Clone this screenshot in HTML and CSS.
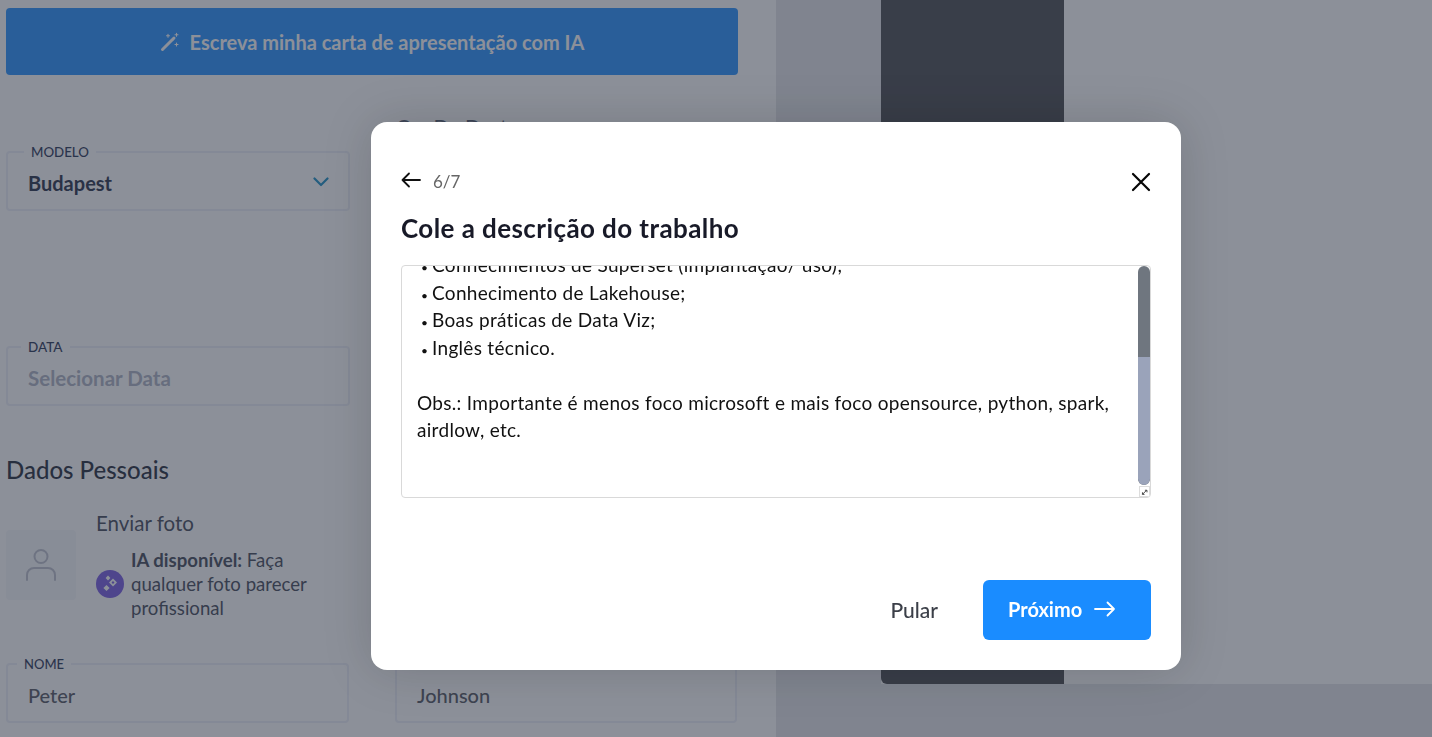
FILE: index.html
```html
<!DOCTYPE html>
<html lang="pt">
<head>
<meta charset="utf-8">
<title>Carta de apresentação</title>
<link rel="stylesheet" href="styles.css">
</head>
<body>
<div class="page">
  <main class="editor">
    <button class="ai-btn">
      <svg class="wand" viewBox="0 0 20 20" width="20" height="20" fill="none" stroke="currentColor" stroke-linecap="round"><path d="M2.500 17.500 12 8" stroke-width="3"/><path d="M12.800 7.200 14 6" stroke-width="3"/><path d="M8 2.200v3M6.500 3.700h3M16.500 1.200v3M15 2.700h3M16.500 11v3M15 12.500h3" stroke-width="1.100"/></svg>
      <span>Escreva minha carta de apresentação com IA</span>
    </button>
    <div class="row row-model">
      <div class="field">
        <span class="field-label label-model">MODELO</span>
        <span class="field-value strong">Budapest</span>
        <svg class="chev" viewBox="0 0 16 10" width="16" height="10" fill="none" stroke="currentColor" stroke-width="2.200" stroke-linecap="round" stroke-linejoin="round"><path d="M1.500 1.500 8 8l6.500-6.500"/></svg>
      </div>
      <div class="col-note">Cor De Destaque</div>
    </div>
    <div class="row row-date">
      <div class="field">
        <span class="field-label">DATA</span>
        <span class="field-value muted">Selecionar Data</span>
      </div>
    </div>
    <h2 class="section-title">Dados Pessoais</h2>
    <div class="photo-row">
      <div class="avatar">
        <svg viewBox="0 0 32 34" width="32" height="34" fill="none" stroke="currentColor" stroke-width="2"><circle cx="16" cy="8.500" r="6.500"/><path d="M2 32v-5a7 7 0 0 1 7-7h14a7 7 0 0 1 7 7v5" stroke-linecap="round"/></svg>
      </div>
      <div class="photo-info">
        <div class="photo-title">Enviar foto</div>
        <div class="ai-note">
          <span class="ai-badge">
            <svg viewBox="0 0 28 28" width="28" height="28" fill="#fff"><path d="M17 8.500l4 4-4 4-4-4zM17 11l-1.500 1.500L17 14l1.500-1.500z" fill-rule="evenodd"/><rect x="10.300" y="6.300" width="3.400" height="3.400" transform="rotate(45 12 8)"/><rect x="8.300" y="15.800" width="4.400" height="4.400" transform="rotate(45 10.500 18)"/></svg>
          </span>
          <p><b>IA disponível:</b> Faça qualquer foto parecer profissional</p>
        </div>
      </div>
    </div>
    <div class="row row-name">
      <div class="field">
        <span class="field-label label-name">NOME</span>
        <span class="field-value">Peter</span>
      </div>
      <div class="field">
        <span class="field-value">Johnson</span>
      </div>
    </div>
  </main>
  <aside class="preview">
    <div class="sheet">
      <div class="sheet-side"></div>
      <div class="sheet-body"></div>
    </div>
  </aside>
</div>

<div class="overlay">
  <section class="modal">
    <header class="modal-top">
      <svg class="back" viewBox="0 0 20 16" width="20" height="16" fill="none" stroke="currentColor" stroke-width="1.800" stroke-linecap="round" stroke-linejoin="round"><path d="M19 8H1.500M8 1.500 1.500 8 8 14.500"/></svg>
      <span class="step">6/7</span>
      <svg class="close" viewBox="0 0 20 20" width="20" height="20" fill="none" stroke="currentColor" stroke-width="2.200" stroke-linecap="round"><path d="M2 2l16 16M18 2 2 18"/></svg>
    </header>
    <h1 class="modal-title">Cole a descrição do trabalho</h1>
    <div class="textarea">
      <div class="textarea-text">
        <p><span class="dot">•</span>Conhecimentos de Superset (implantação/ uso);</p>
        <p><span class="dot">•</span>Conhecimento de Lakehouse;</p>
        <p><span class="dot">•</span>Boas práticas de Data Viz;</p>
        <p><span class="dot">•</span>Inglês técnico.</p>
        <p class="blank">&nbsp;</p>
        <p>Obs.: Importante é menos foco microsoft e mais foco opensource, python, spark, airdlow, etc.</p>
      </div>
      <div class="scrollbar"><div class="thumb"></div></div>
      <svg class="resizer" viewBox="0 0 11 11" width="11" height="11" fill="none" stroke="#444" stroke-width="1.200"><path d="M3 9l5-5M6 4h2.500v2.500M3 6.500V9h2.500" /></svg>
    </div>
    <footer class="modal-actions">
      <button class="skip">Pular</button>
      <button class="next">
        <span>Próximo</span>
        <svg viewBox="0 0 22 16" width="22" height="16" fill="none" stroke="currentColor" stroke-width="1.800" stroke-linecap="round" stroke-linejoin="round"><path d="M1 8h19M13.500 1.500 20 8l-6.500 6.500"/></svg>
      </button>
    </footer>
  </section>
</div>
</body>
</html>
```
FILE: styles.css
```css
* { box-sizing: border-box; }
html, body { margin: 0; height: 100%; overflow: hidden; }
body { font-family: "Lato", "Noto Sans", sans-serif; color: #1b2233; background: #e3e4e8; }
p, h1, h2 { margin: 0; }
button { font-family: inherit; border: 0; cursor: pointer; }

.page { display: flex; height: 737px; overflow: hidden; }
.editor { width: 776px; flex: none; background: #fff; padding: 8px 38px 0 6px; }
.preview { flex: 1; padding-left: 105px; background: #e3e4e8; }
.sheet { display: flex; height: 684px; background: #fff; }
.sheet-side { width: 183px; background: #3f4146; border-radius: 0 0 0 6px; }
.sheet-body { flex: 1; background: #fff; }

.ai-btn { display: flex; width: 100%; height: 67px; align-items: center; justify-content: center; gap: 10px; background: #1a8cff; color: #fff; border-radius: 4px; font-size: 20px; font-weight: 700; padding: 0; }
.wand { flex: none; }

.row { display: flex; gap: 46px; }
.row-model { margin-top: 76px; }
.row-date { margin-top: 135px; }
.row-name { margin-top: 43px; }
.col-note { flex: 1; font-size: 20.500px; color: #4a5468; margin-top: -36px; }

.field { position: relative; flex: none; width: 344px; height: 60px; border: 2px solid #eceef7; border-radius: 4px; display: flex; align-items: center; padding: 4px 20px 0; }
.row-name .field { width: 343px; }
.row-name .field + .field { width: 342px; }
.field-label { position: absolute; left: 13px; top: -8px; background: #fff; padding: 0 7px; font-size: 13.500px; font-weight: 500; line-height: 14px; color: #1b2a4e; }
.label-model { left: 16px; font-size: 13.300px; }
.label-name { left: 9px; font-size: 13px; }
.field-value { font-size: 20px; font-weight: 500; color: #4a4d58; }
.field-value.strong { font-weight: 700; color: #1b2540; }
.field-value.muted { font-size: 20.500px; color: #a9afc0; font-weight: 700; }
.chev { position: absolute; right: 19px; top: 24px; color: #0f8ac2; }

.section-title { margin-top: 50px; font-size: 24px; line-height: 28px; font-weight: 500; color: #16202f; }
.photo-row { display: flex; gap: 20px; margin-top: 26px; height: 110px; }
.avatar { width: 70px; height: 70px; margin-top: 20px; background: #f6f7fa; border-radius: 4px; display: flex; align-items: center; justify-content: center; color: #b9bdca; }
.photo-info { width: 240px; }
.photo-title { font-size: 20.500px; font-weight: 400; line-height: 26px; color: #39404f; }
.ai-note { display: flex; align-items: center; gap: 7px; margin-top: 12px; }
.ai-badge { width: 28px; height: 28px; flex: none; margin-top: -1px; border-radius: 50%; background: #6f52e0; display: flex; }
.ai-note p { font-size: 18.600px; line-height: 24px; color: #39404f; }
.ai-note b { font-weight: 700; }

.overlay { position: fixed; inset: 0; background: rgba(52, 59, 75, .57); }
.modal { position: absolute; left: 371px; top: 122px; width: 810px; height: 548px; background: #fff; border-radius: 16px; padding: 48px 30px 30px; display: flex; flex-direction: column; box-shadow: 0 0 50px rgba(0, 0, 0, .16); }
.modal-top { display: flex; align-items: center; height: 22px; color: #111; }
.back { flex: none; margin-top: -2px; }
.step { margin-left: 12px; font-size: 17px; color: #666; }
.close { margin: 1px 0 0 auto; flex: none; color: #050505; }
.modal-title { margin-top: 20px; font-size: 26px; letter-spacing: .42px; line-height: 32px; font-weight: 700; color: #181a28; }
.textarea { position: relative; margin-top: 21px; height: 233px; border: 1px solid #d9d9d9; border-radius: 4px; overflow: hidden; }
.textarea-text { margin-top: -15px; padding: 0 28px 0 15px; font-size: 19px; letter-spacing: .3px; line-height: 27.500px; color: #111; }
.dot { display: inline-block; width: 15px; padding-left: 4px; font-size: 12px; line-height: 1; }
.scrollbar { position: absolute; right: 0; top: 0; width: 12px; height: 219px; border-radius: 6px; background: #6f767f; overflow: hidden; }
.thumb { margin-top: 91px; height: 128px; background: #9aa3ba; border-radius: 0 0 6px 6px; }
.resizer { position: absolute; right: 0; bottom: 0; border: 1px solid #ddd; background: #fff; }

.modal-actions { margin-top: auto; display: flex; justify-content: flex-end; align-items: center; gap: 45px; }
.skip { background: none; font-size: 21px; font-weight: 500; color: #3b3f48; padding: 0; margin-top: -2px; }
.next { width: 168px; height: 60px; background: #1a8cff; color: #fff; border-radius: 6px; font-size: 20px; font-weight: 700; display: flex; align-items: center; gap: 12px; padding: 0 0 2px 25px; }
```
